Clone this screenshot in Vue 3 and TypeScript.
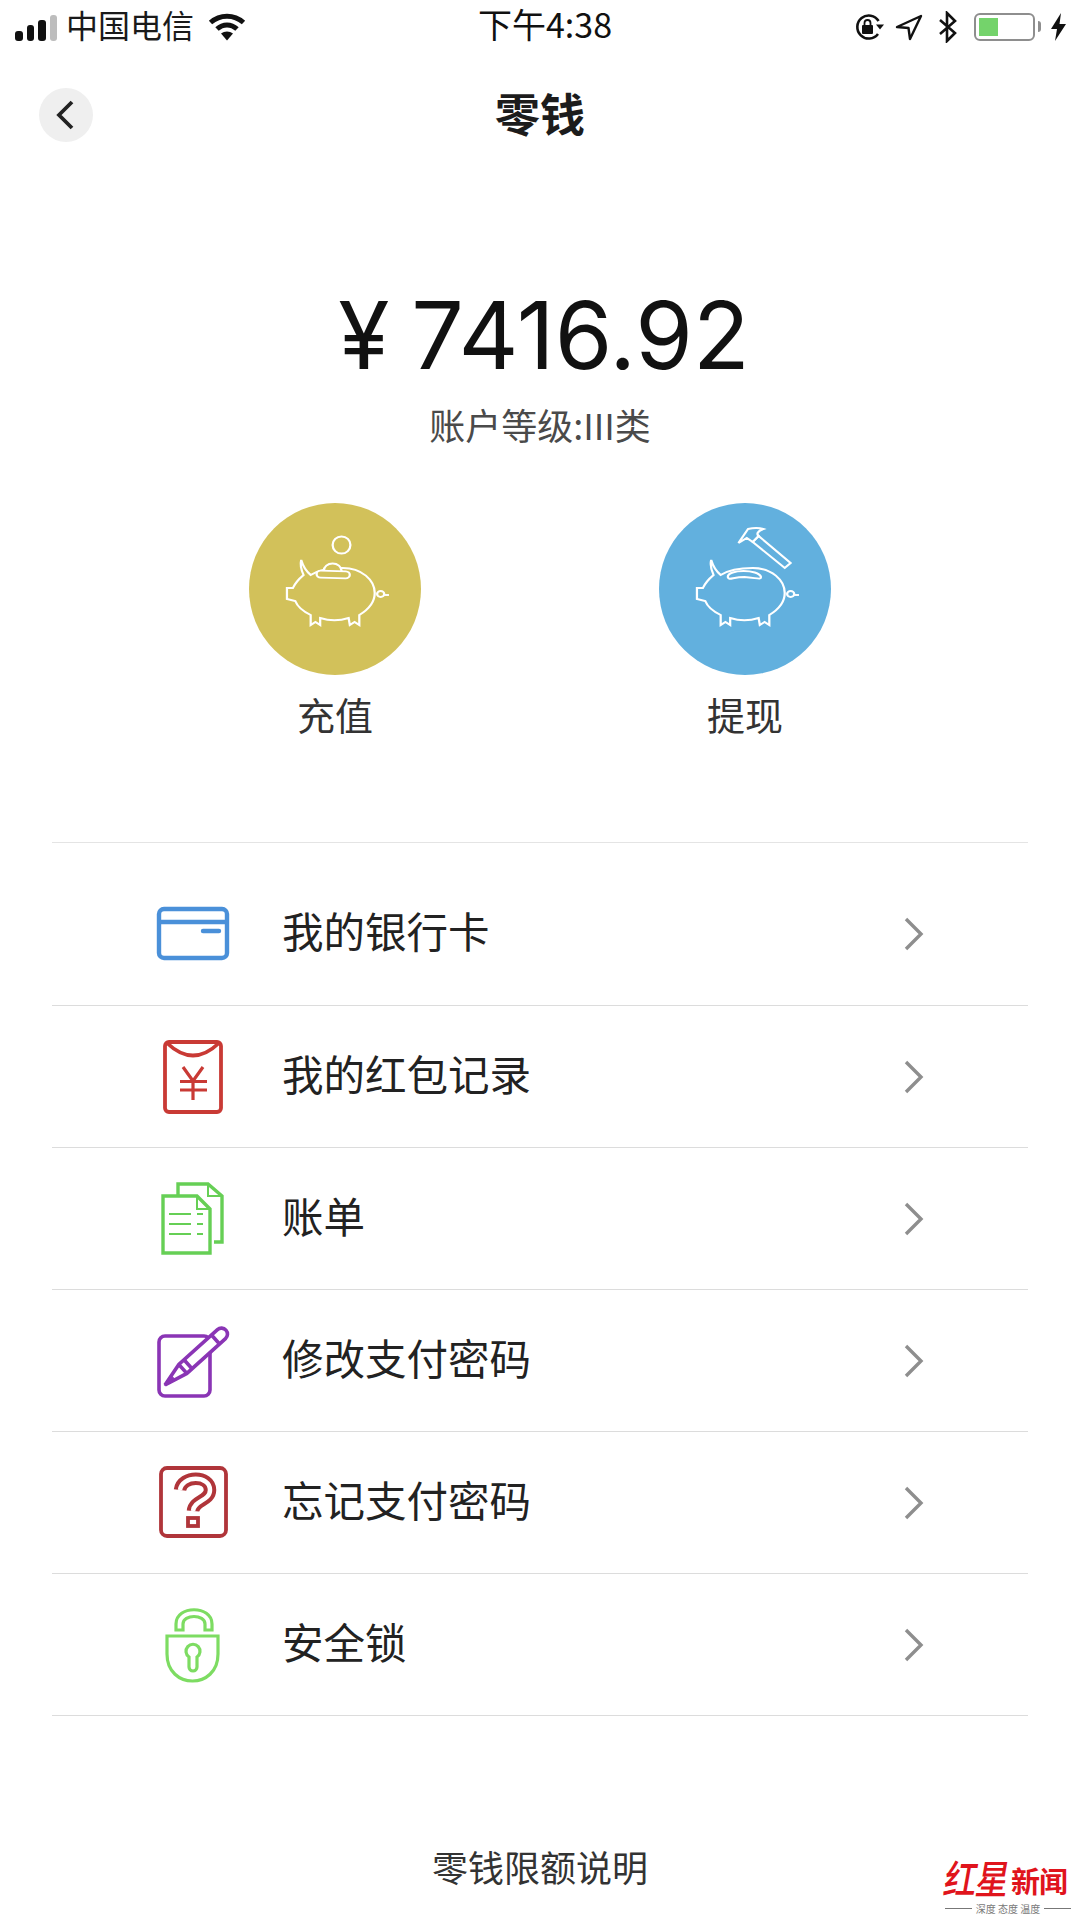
<template>
  <div class="page">
    <header class="status-bar">
      <div class="status-left">
        <div class="signal">
          <i v-for="(h, n) in signal" :key="n" :class="{ off: n === 3 }" :style="{ height: h + 'px' }"></i>
        </div>
        <span class="carrier">中国电信</span>
        <svg class="wifi" width="38" height="28" viewBox="0 0 38 28">
          <path d="M2.500 9.500 C12 1 26 1 35.500 9.500" fill="none" stroke="#111" stroke-width="5" />
          <path d="M9 16 C15 10.500 23 10.500 29 16" fill="none" stroke="#111" stroke-width="5" />
          <path d="M13 20.500 C16.500 17.800 21.500 17.800 25 20.500 L19 27.500 Z" fill="#111" />
        </svg>
      </div>
      <span class="time">下午4:38</span>
      <div class="status-right">
        <svg class="rotation" width="30" height="30" viewBox="0 0 30 30">
          <path d="M24 22 A11.500 11.500 0 1 1 24.600 9" fill="none" stroke="#111" stroke-width="2.600" />
          <path d="M22 12.500 h8 l-4 5 Z" fill="#111" />
          <rect x="8" y="13" width="11" height="9" rx="1" fill="#111" />
          <path d="M10.500 13 v-2 a3 3 0 0 1 6 0 v2" fill="none" stroke="#111" stroke-width="1.800" />
        </svg>
        <svg width="28" height="28" viewBox="0 0 28 28">
          <path d="M2 14 L26 3 L15 26 L13.500 15 Z" fill="#fff" stroke="#111" stroke-width="2.400" stroke-linejoin="round" />
        </svg>
        <svg width="20" height="32" viewBox="0 0 20 32">
          <path d="M2 9 L17 22 L9 30 V2 L17 10 L2 23" fill="none" stroke="#111" stroke-width="2.600" />
        </svg>
        <div class="battery"><div class="battery-fill"></div></div>
        <svg width="17" height="28" viewBox="0 0 17 28">
          <path d="M11 0 L1 16 H7 L5 28 L16 11 H9.500 Z" fill="#111" />
        </svg>
      </div>
    </header>

    <nav class="nav-bar">
      <div class="back">
        <svg width="20" height="32" viewBox="0 0 20 32">
          <path d="M17 3 L4 16 L17 29" fill="none" stroke="#222" stroke-width="3.800" />
        </svg>
      </div>
      <h1 class="nav-title">零钱</h1>
    </nav>

    <section class="balance">
      <div class="amount"><span class="yen">¥</span>7416.92</div>
      <div class="level">账户等级:III类</div>
    </section>

    <section class="actions">
      <div class="action">
        <div class="circle gold">
          <svg width="172" height="172" viewBox="0 0 145 172" preserveAspectRatio="none" fill="none" stroke="#fff" stroke-width="1.900">
            <path :d="pigPath" />
            <circle cx="111" cy="91" r="3" />
            <path d="M114 92 H118" />
            <ellipse cx="78" cy="42" rx="7.500" ry="8.500" />
            <path d="M63 68 a7.500 7.500 0 0 1 15 0" fill="#d2c15a" />
            <rect x="57" y="68" width="28" height="7" rx="3.500" transform="rotate(2 71 71)" fill="#d2c15a" />
          </svg>
        </div>
        <span class="action-label">充值</span>
      </div>
      <div class="action">
        <div class="circle blue">
          <svg width="172" height="172" viewBox="0 0 145 172" preserveAspectRatio="none" fill="none" stroke="#fff" stroke-width="1.900">
            <path :d="pigPath" />
            <circle cx="111" cy="91" r="3" />
            <path d="M114 92 H118" />
            <path d="M58 74 C58 66 84 66 86 74 C86 77 83 75 72 74 C62 74 59 78 58 74 Z" />
            <path d="M79 39 L84 33 L111 60 L106 65 Z" />
            <path d="M67 40 L75 26 C79 25 85 25 88 26 C83 28 82 31 84 33 L79 39 L74 35 Z" />
          </svg>
        </div>
        <span class="action-label">提现</span>
      </div>
    </section>

    <ul class="menu">
      <li v-for="item in menu" :key="item.key" class="menu-row">
        <svg class="menu-icon" width="90" height="84" viewBox="0 0 90 84" fill="none">
          <g v-if="item.key === 'card'" stroke="#4a90d9" stroke-width="4.400">
            <rect x="9" y="17" width="68" height="49" rx="5" />
            <path d="M9 30 H77" />
            <path d="M53 39 H69" stroke-linecap="round" />
          </g>
          <g v-else-if="item.key === 'packet'" stroke="#c93a35" stroke-width="3.800">
            <rect x="15" y="8" width="56" height="70" rx="4" />
            <path d="M17 9 Q43 34 69 9" />
            <path d="M33 33 L43 47 L53 33 M43 47 V66 M30 47.500 H57 M30 56 H57" stroke-width="3.200" />
          </g>
          <g v-else-if="item.key === 'bill'" stroke="#66cf55" stroke-width="3.400">
            <path d="M28 19 V8 H58 L72 20 V66 H64" />
            <path d="M58 8 V20 H72" stroke-width="2" />
            <path d="M13 20 H47 L60 33 V77 H13 Z" fill="#fff" />
            <path d="M47 20 V33 H60" stroke-width="2" />
            <path d="M19 38 H41 M47 38 H53 M19 48 H41 M47 48 H53 M19 58 H41 M47 58 H53" stroke-width="2.200" />
          </g>
          <g v-else-if="item.key === 'pen'" stroke="#8a35b5" stroke-width="3.600">
            <rect x="9" y="18" width="51" height="60" rx="6" />
            <g transform="translate(15 67) rotate(-42)" fill="#fff">
              <path d="M0 0 L24 -6 H76 A6 6 0 0 1 76 6 H24 Z" />
              <path d="M0 0 L11 -3.500 V3.500 Z" fill="#8a35b5" stroke-width="1" />
              <path d="M24 -6 V6 M31 -6 V6 M68 -6 V6" />
            </g>
          </g>
          <g v-else-if="item.key === 'question'" stroke="#b0353a" stroke-width="3.800">
            <rect x="11" y="8" width="65" height="68" rx="6" />
            <path d="M30 30 C32 15 60 15 60 30 C60 41 44 40 43 51" stroke-width="12.500" />
            <path d="M30 30 C32 15 60 15 60 30 C60 41 44 40 43 51" stroke="#fff" stroke-width="4.500" />
            <rect x="38" y="58" width="10" height="8" stroke-width="3.800" />
          </g>
          <g v-else stroke="#7ddc62" stroke-width="3.200">
            <path d="M17 34 H68 V52 C68 88 17 88 17 52 Z" />
            <path d="M26 28 V22 C26 3 62 3 62 22 V28 H55 V22 C55 12 33 12 33 22 V28 Z" />
            <path d="M39 55 A7 7 0 1 1 47 55 V65 A4 4 0 0 1 39 65 Z" />
          </g>
        </svg>
        <span class="menu-text">{{ item.text }}</span>
        <svg class="chevron" width="20" height="34" viewBox="0 0 20 34">
          <path d="M2 2 L17 17 L2 32" fill="none" stroke="#8e8e8e" stroke-width="3.400" />
        </svg>
      </li>
    </ul>

    <footer class="limit">零钱限额说明</footer>

    <div class="watermark">
      <div class="wm-logo"><b class="wm-brush">红星</b><b class="wm-news">新闻</b></div>
      <div class="wm-sub"><i></i><span>深度 态度 温度</span><i></i></div>
    </div>
  </div>
</template>

<script setup lang="ts">
interface MenuItem {
  key: string
  text: string
}

const signal = [10, 16, 21, 26]

const pigPath =
  'M44 57 C46 65 49 69 52 72 C60 66 70 65 79 65 C95 65 106 77 106 90 C106 100 100 107 93 112 L93 122 L89 119 L85 122 L84 115 C76 118 68 118 60 115 L60 122 L56 119 L52 122 L52 112 C45 108 41 104 39 98 L32 96 L32 85 L37 85 C39 80 42 76 46 72 C44 67 43 62 44 57 Z'

const menu: MenuItem[] = [
  { key: 'card', text: '我的银行卡' },
  { key: 'packet', text: '我的红包记录' },
  { key: 'bill', text: '账单' },
  { key: 'pen', text: '修改支付密码' },
  { key: 'question', text: '忘记支付密码' },
  { key: 'lock', text: '安全锁' }
]
</script>

<style>
html,
body {
  margin: 0;
  background: #fff;
}
</style>

<style scoped>
.page {
  position: relative;
  width: 1080px;
  height: 1920px;
  overflow: hidden;
  background: #fff;
  color: #222;
  font-family: "Noto Sans CJK SC", "Noto Sans", sans-serif;
}

.status-bar {
  position: relative;
  display: flex;
  justify-content: space-between;
  align-items: center;
  height: 54px;
  padding: 0 13px 0 15px;
}

.status-left,
.status-right {
  display: flex;
  align-items: center;
}

.signal {
  display: flex;
  align-items: flex-end;
  gap: 4px;
  height: 26px;
  margin-top: 2px;
}

.signal i {
  width: 7.500px;
  background: #111;
  border-radius: 3px;
}

.signal i.off {
  background: #bdbdbd;
}

.carrier {
  margin-left: 9px;
  padding-bottom: 6px;
  font-size: 32px;
  line-height: 40px;
  color: #1a1a1a;
}

.wifi {
  margin-left: 14px;
  margin-top: -1px;
}

.time {
  position: absolute;
  left: 478px;
  top: 3px;
  font-size: 34px;
  line-height: 42px;
  color: #111;
}

.status-right {
  gap: 15px;
}

.rotation {
  margin-right: -2px;
  transform: translateX(2px);
}

.battery {
  position: relative;
  box-sizing: border-box;
  width: 61px;
  height: 28px;
  margin-left: 1px;
  padding: 3px;
  border: 2.500px solid #8e8e8e;
  border-radius: 6px;
}

.battery::after {
  content: "";
  position: absolute;
  right: -8px;
  top: 6px;
  width: 3px;
  height: 11px;
  background: #8e8e8e;
  border-radius: 0 3px 3px 0;
}

.battery-fill {
  width: 19px;
  height: 100%;
  background: #74d36b;
}

.nav-bar {
  position: relative;
  display: flex;
  justify-content: center;
  align-items: center;
  height: 122px;
}

.back {
  position: absolute;
  left: 39px;
  top: 34px;
  display: flex;
  justify-content: center;
  align-items: center;
  width: 54px;
  height: 54px;
  padding-right: 3px;
  box-sizing: border-box;
  border-radius: 50%;
  background: #efefef;
}

.nav-title {
  margin: 0;
  padding-bottom: 6px;
  font-size: 45px;
  font-weight: 700;
  color: #1c1c1c;
}

.balance {
  display: flex;
  flex-direction: column;
  align-items: center;
  padding-top: 94px;
}

.amount {
  display: flex;
  align-items: center;
  margin-left: 8px;
  font-family: Inter, Roboto, sans-serif;
  font-size: 93px;
  line-height: 130px;
  color: #111;
}

.yen {
  margin-right: 22px;
}

.level {
  margin-top: 1px;
  font-size: 36px;
  line-height: 46px;
  color: #4a4a4a;
}

.actions {
  display: flex;
  gap: 238px;
  justify-content: center;
  margin-top: 56px;
}

.action {
  display: flex;
  flex-direction: column;
  align-items: center;
  gap: 12px;
}

.circle {
  width: 172px;
  height: 172px;
  border-radius: 50%;
}

.circle svg {
  display: block;
}

.gold {
  background: #d2c15a;
}

.blue {
  background: #62b0de;
}

.action-label {
  font-size: 38px;
  line-height: 54px;
  color: #333;
}

.menu {
  list-style: none;
  margin: 101px 52px 0;
  padding: 0;
  border-top: 1px solid #e4e4e4;
}

.menu-row {
  display: flex;
  align-items: center;
  box-sizing: border-box;
  height: 142px;
  padding: 0 104px 0 98px;
  border-bottom: 1px solid #dcdcdc;
}

.menu-row:first-child {
  height: 163px;
  padding-top: 20px;
}

.menu-icon {
  flex: none;
  margin-top: -1px;
}

.menu-text {
  flex: 1;
  margin-left: 42px;
  padding-bottom: 8px;
  font-size: 41.500px;
  line-height: 56px;
  color: #222;
}

.chevron {
  flex: none;
  margin-top: 0;
}

.limit {
  margin-top: 125px;
  font-size: 36px;
  line-height: 50px;
  text-align: center;
  color: #333;
}

.watermark {
  position: absolute;
  left: 945px;
  top: 1850px;
  width: 126px;
}

.wm-logo {
  display: flex;
  align-items: flex-end;
  height: 50px;
  color: #e0141c;
}

.wm-brush {
  font-size: 33px;
  font-weight: 500;
  line-height: 46px;
  letter-spacing: -1px;
  transform: skewX(-10deg) scaleY(1.200);
}

.wm-news {
  margin-left: 2px;
  font-size: 29px;
  line-height: 40px;
  letter-spacing: -1px;
  font-weight: 700;
}

.wm-sub {
  display: flex;
  align-items: center;
  gap: 4px;
  height: 14px;
  margin-top: 1px;
  font-size: 10px;
  color: #777;
  white-space: nowrap;
}

.wm-sub i {
  flex: 1;
  height: 1px;
  background: #777;
}
</style>
